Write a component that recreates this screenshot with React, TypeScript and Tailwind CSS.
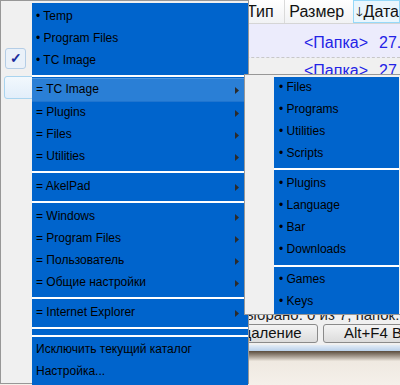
import React from "react";

const menuFont = { fontFamily: '"Liberation Sans", Arial, sans-serif' };

function Arrow() {
  return (
    <svg width="4" height="7" viewBox="0 0 4 7" className="absolute right-[9px] top-[8px]">
      <path d="M0 0 L4 3.5 L0 7 Z" fill="#2b2b2b" />
    </svg>
  );
}

function MainItem({ label, sub, active }: { label: string; sub?: boolean; active?: boolean }) {
  return (
    <div
      className={`relative flex h-[22px] items-center pb-[2px] pl-[4px] text-[12px] text-black ${
        active ? "bg-[#2a7fd6]" : ""
      }`}
    >
      {label}
      {sub && <Arrow />}
    </div>
  );
}

function Group({ children, className = "" }: { children?: React.ReactNode; className?: string }) {
  return <div className={`bg-[#0064cc] ${className}`}>{children}</div>;
}

function Sep() {
  return <div className="h-[2px] bg-white" />;
}

function SubItem({ label }: { label: string }) {
  return (
    <div className="flex h-[22px] items-center pb-[2px] pl-[5px] text-[12px] text-black">
      {"• " + label}
    </div>
  );
}

function Background() {
  return (
    <div className="flex h-[385px] w-[400px] flex-col overflow-hidden whitespace-nowrap text-[16px]" style={menuFont}>
      <div className="flex h-[24px] shrink-0 border-b border-[#d5d5d5] bg-gradient-to-b from-white to-[#f1f2f4]">
        <div className="w-[262px] border-r border-[#dadada]" />
        <div className="flex w-[44px] items-center border-r border-[#dadada] pl-[3px] text-[#111]">Тип</div>
        <div className="flex w-[72px] items-center pl-[4px] text-[#111]">Размер</div>
        <div className="flex flex-1 items-center border border-[#96d9f9] bg-[#eaf6fd] pl-[2px] text-[#111]">
          <span className="mr-[1px] text-[13px]">🡓</span>Дата
        </div>
      </div>
      <div className="flex h-[34px] shrink-0 items-center border-b border-dashed border-[#c8c8c8] bg-[#ececfc] pt-[4px] text-[#2323e6]">
        <div className="w-[370px] shrink-0 pr-[2px] text-right">&lt;Папка&gt;</div>
        <div className="pl-[9px]">27.10.2010</div>
      </div>
      <div className="flex h-[30px] shrink-0 items-center pb-[4px] text-[#2323e6]">
        <div className="w-[370px] shrink-0 pr-[2px] text-right">&lt;Папка&gt;</div>
        <div className="pl-[9px]">27.10.2010</div>
      </div>
      <div className="flex-1" />
      <div className="flex h-[17px] shrink-0 items-end overflow-hidden pl-[236px] text-[15px] leading-[15px] text-[#222]">
        Выбрано: 0 из 7, папок: 0 из 2
      </div>
      <div className="flex h-[23px] shrink-0 items-center gap-[5px] pl-[196px]">
        <div className="flex h-[19px] w-[122px] shrink-0 items-center justify-center rounded-[3px] border border-[#8a8a8a] bg-gradient-to-b from-[#f4f4f4] to-[#dcdcdc] text-[15px] text-[#111]">
          F8 Удаление
        </div>
        <div className="flex h-[19px] w-[122px] shrink-0 items-center justify-start rounded-[3px] border border-[#8a8a8a] bg-gradient-to-b from-[#f4f4f4] to-[#dcdcdc] pl-[20px] text-[15px] text-[#111]">
          Alt+F4 Выход
        </div>
      </div>
      <div className="h-[6px] shrink-0 bg-gradient-to-b from-[#e3ecf6] to-[#b9d0ea]" />
      <div className="h-[34px] shrink-0 bg-gradient-to-b from-[#5a4c3e] via-[#efe9e1] via-30% to-[#f5f0ea]" />
    </div>
  );
}

export default function App() {
  return (
    <div className="relative h-[385px] w-[400px] overflow-hidden bg-[#f0f0f0]" style={menuFont}>
      <Background />

      {/* main popup menu */}
      <div className="absolute left-0 top-0 h-[384px] w-[249px] border border-[#979797] bg-[#f0f0f0] pl-[31px] pt-[2px]">
        {/* hover highlight, behind the blue groups */}
        <div className="absolute left-[3px] top-[75px] h-[23px] w-[243px] rounded-[3px] border border-[#a9d4ef] bg-gradient-to-b from-[#f2f8fd] to-[#e2eefa]" />

        {/* check mark box */}
        <div className="absolute left-[4px] top-[47px] flex h-[21px] w-[21px] items-center justify-center rounded-[3px] border border-[#b4cde6] bg-[#eaf1f9] text-[14px] font-bold text-[#1b2c9c]">
          ✓
        </div>

        <div className="relative flex flex-col">
          <Group className="py-[3px]">
            <MainItem label="• Temp" />
            <MainItem label="• Program Files" />
            <MainItem label="• TC Image" />
          </Group>
          <Sep />
          <Group className="pb-[3px] pt-[1px]">
            <div className="h-[1px] bg-[#4f96de]" />
            <MainItem label="= TC Image" sub active />
            <div className="h-[1px] bg-[#1f74cf]" />
            <MainItem label="= Plugins" sub />
            <MainItem label="= Files" sub />
            <MainItem label="= Utilities" sub />
          </Group>
          <Sep />
          <Group className="py-[3px]">
            <MainItem label="= AkelPad" sub />
          </Group>
          <Sep />
          <Group className="py-[3px]">
            <MainItem label="= Windows" sub />
            <MainItem label="= Program Files" sub />
            <MainItem label="= Пользователь" sub />
            <MainItem label="= Общие настройки" sub />
          </Group>
          <Sep />
          <Group className="py-[3px]">
            <MainItem label="= Internet Explorer" sub />
          </Group>
          <Sep />
          <Group className="h-[6px]" />
          <Sep />
          <Group className="pt-[2px] pb-[4px]">
            <MainItem label="Исключить текущий каталог" />
            <MainItem label="Настройка..." />
          </Group>
        </div>
      </div>

      {/* submenu */}
      <div className="absolute left-[244px] top-[74px] h-[241px] w-[160px] border border-[#979797] bg-[#f0f0f0] pl-[29px] pt-[2px]">
        <div className="flex w-[125px] flex-col">
          <Group className="pb-[3px]">
            <SubItem label="Files" />
            <SubItem label="Programs" />
            <SubItem label="Utilities" />
            <SubItem label="Scripts" />
          </Group>
          <Sep />
          <Group className="pt-[3px] pb-[4px]">
            <SubItem label="Plugins" />
            <SubItem label="Language" />
            <SubItem label="Bar" />
            <SubItem label="Downloads" />
          </Group>
          <Sep />
          <Group className="pt-[2px] pb-[1px]">
            <SubItem label="Games" />
            <SubItem label="Keys" />
          </Group>
        </div>
      </div>
    </div>
  );
}
